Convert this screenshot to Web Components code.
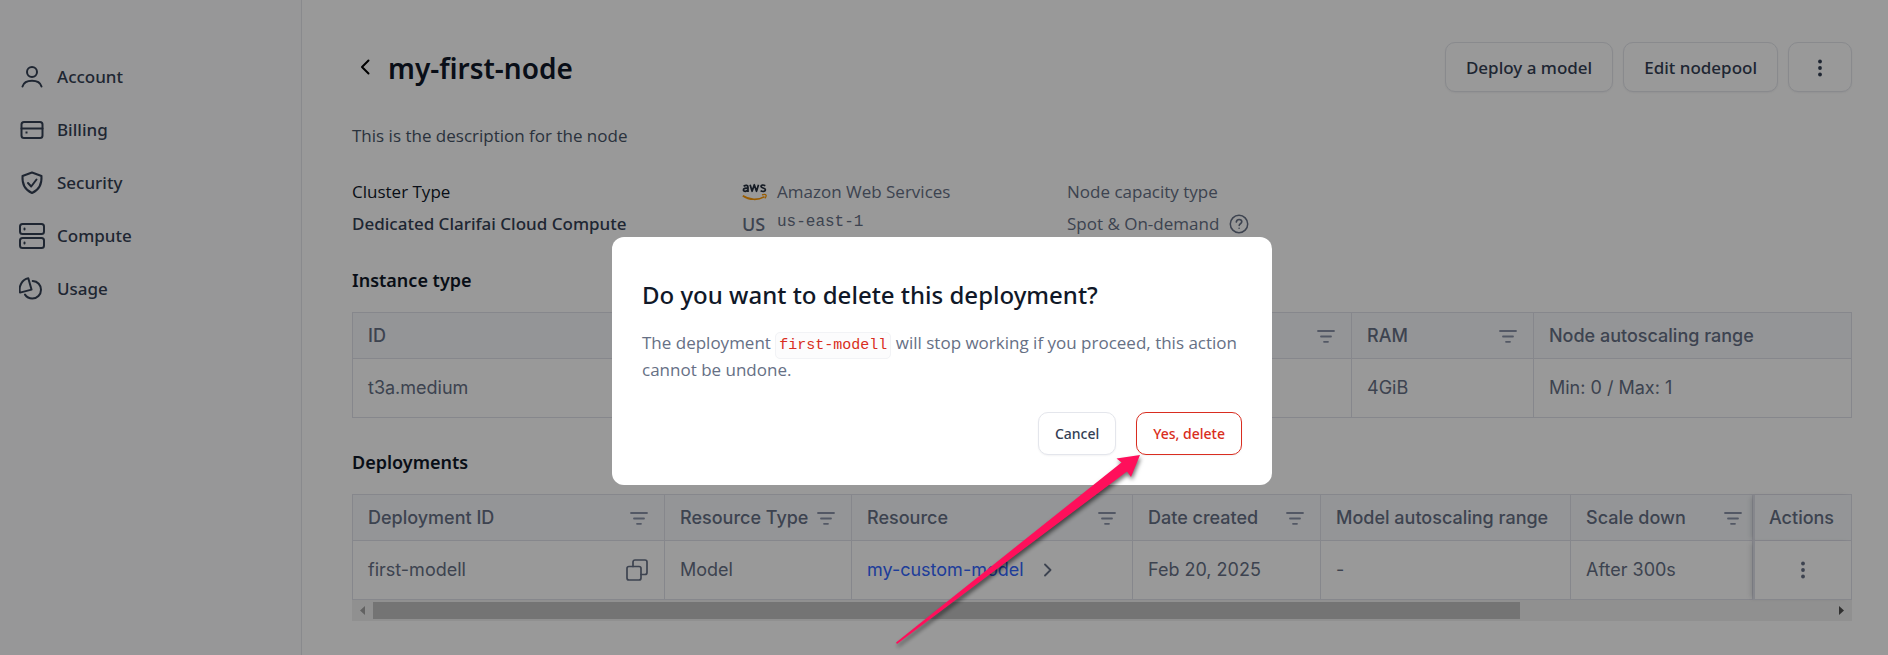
<!DOCTYPE html>
<html lang="en">
<head>
<meta charset="utf-8">
<title>my-first-node</title>
<style>
  body {
    margin: 0;
    background: #fff;
    color: #667085;
    font: 400 17px/24px "Open Sans", "Noto Sans", sans-serif;
    --ink: #101828;
    --text: #344054;
    --line: #e0e1ea;
    --danger: #d92d20;
    --ui: "Noto Sans", "Open Sans", sans-serif;
    --mono: "Liberation Mono", monospace;
  }
</style>
</head>
<body>
<app-shell>
  <side-nav slot="nav">
    <nav-item icon="user" href="#account">Account</nav-item>
    <nav-item icon="card" href="#billing">Billing</nav-item>
    <nav-item icon="shield" href="#security">Security</nav-item>
    <nav-item icon="servers" href="#compute">Compute</nav-item>
    <nav-item icon="pie" href="#usage">Usage</nav-item>
  </side-nav>
  <page-header heading="my-first-node">
    <action-button>Deploy a model</action-button>
    <action-button>Edit nodepool</action-button>
    <action-button label="More actions"><ui-icon name="dots"></ui-icon></action-button>
  </page-header>
  <node-summary></node-summary>
  <page-section heading="Instance type"><instance-table></instance-table></page-section>
  <page-section heading="Deployments"><deployment-table></deployment-table></page-section>
</app-shell>
<confirm-dialog heading="Do you want to delete this deployment?">
  The deployment <code-chip>first-modell</code-chip> will stop working if you proceed, this action cannot be undone.
  <action-button slot="actions" size="small">Cancel</action-button>
  <action-button slot="actions" size="small" tone="danger">Yes, delete</action-button>
  <pointer-arrow slot="pointer"></pointer-arrow>
</confirm-dialog>

<script>
const define = (name, render) => customElements.define(name, class extends HTMLElement {
  connectedCallback() {
    if (this.shadowRoot) return;
    const t = document.createElement('template');
    t.innerHTML = render(this);
    this.attachShadow({ mode: 'open' }).append(t.content.cloneNode(true));
  }
});

const ICONS = {
  user: [24, 24, '<g stroke-width="2"><circle cx="12" cy="7" r="5"/><path d="M2.500 21.500c1-3.400 4.800-5.700 9.500-5.700s8.500 2.300 9.500 5.700"/></g>'],
  card: [24, 24, '<g stroke-width="2"><rect x="1.500" y="4" width="21" height="16" rx="2.500"/><path d="M1.500 10.500h21"/></g><rect x="5.500" y="13.500" width="2" height="2" fill="currentColor" stroke="none"/>'],
  shield: [24, 24, '<g stroke-width="2"><path d="M12 1.500 21.500 5c.5 8-2.500 14-9.500 17C5 19 2 13 2.500 5z"/><path d="m8 12 3.200 3.500L16.500 8.500"/></g>'],
  servers: [26, 26, '<g stroke-width="2"><rect x="1" y="1" width="24" height="10" rx="2.500"/><rect x="1" y="15" width="24" height="10" rx="2.500"/></g><path d="M5.500 5.500v1M5.500 19.500v1" stroke-width="2"/>'],
  pie: [26, 24, '<g stroke-width="2"><path d="M9.300 1.200 12.500 12.600 1 15.600C-.5 9 3 2.500 9.300 1.200z"/><path d="M13.700 4.100c5 .2 8.300 4.100 8.300 8.600 0 5-3.900 8.800-8.700 8.800-3.100 0-5.700-1.500-7.300-3.900"/></g>'],
  back: [10, 16, '<path d="M8.500 1.500 2 8l6.500 6.500" stroke-width="2"/>'],
  next: [8, 14, '<path d="M1 1.500 6.500 7 1 12.500" stroke-width="1.800"/>'],
  dots: [4, 18, '<g fill="currentColor" stroke="none"><circle cx="2" cy="2.500" r="1.900"/><circle cx="2" cy="9" r="1.900"/><circle cx="2" cy="15.500" r="1.900"/></g>'],
  filter: [18, 14, '<path d="M1 2h16M4 7.500h10M7 12.800h4" stroke-width="1.800"/>'],
  copy: [22, 22, '<g stroke-width="1.700"><rect x="1" y="7.500" width="14" height="13.500" rx="2"/><path d="M7 7.500V3a2 2 0 0 1 2-2h10a2 2 0 0 1 2 2v10.500a2 2 0 0 1-2 2h-4"/></g>'],
  help: [20, 20, '<circle cx="10" cy="10" r="8.700" stroke-width="1.500"/><path d="M7.300 8c.3-1.700 1.400-2.500 2.800-2.500 1.500 0 2.700.9 2.700 2.300 0 1.900-2.600 2-2.600 3.700M10.100 14.200v.1" stroke-width="1.600"/>']
};

define('ui-icon', el => {
  const [w, h, body] = ICONS[el.getAttribute('name')];
  return `<style>:host{display:inline-flex;flex:none}svg{display:block}</style>
  <svg width="${w}" height="${h}" viewBox="0 0 ${w} ${h}" fill="none" stroke="currentColor" stroke-linecap="round" stroke-linejoin="round" aria-hidden="true">${body}</svg>`;
});

define('aws-logo', () => `<style>:host{display:flex;flex-direction:column;width:25px;flex:none}svg{display:block}</style>
  <svg width="25" height="18" viewBox="0 0 25 18" fill="none" role="img" aria-label="AWS">
    <g stroke="#252f3e" stroke-width="1.700" stroke-linejoin="round">
      <path d="M1.600 3.200C4 1.800 6 2.200 6 4.200V9M6 5.300C3.500 4.700 1.300 5.400 1.400 7c.1 2 3.600 1.700 4.600-.3"/>
      <path d="M8.100 1.700 10.100 8.300 12.300 1.700 14.500 8.300 16.500 1.700"/>
      <path d="M23.300 2.700C21 1.500 18.900 2 19 3.500c.1 1.900 4.500 1.200 4.400 3.400-.1 1.800-2.700 2-4.800.9"/>
    </g>
    <path d="M.8 12.700c6.500 4.500 15.500 4.700 21.700.9" stroke="#f90" stroke-width="1.700"/>
    <path d="M20 11.900c1.800-.5 3.600-.5 4 .1.300.7-.2 2.300-1.200 3.400" stroke="#f90" stroke-width="1.300"/>
  </svg>`);

define('app-shell', () => `<style>
  :host{display:grid;grid-template-columns:302px minmax(0,1fr);min-height:100vh}
  aside{background:#fcfcfd;border-right:1px solid #e4e7ec}
  main{padding:42px 36px 24px 50px}
  </style><aside><slot name="nav"></slot></aside><main><slot></slot></main>`);

define('side-nav', () => `<style>:host{display:block}nav{display:flex;flex-direction:column;padding-top:50px}</style>
  <nav aria-label="Settings"><slot></slot></nav>`);

define('nav-item', el => `<style>
  :host{display:block}
  a{display:flex;align-items:center;gap:12px;height:53px;padding-left:19px;color:var(--text);font:500 17px/24px var(--ui);text-decoration:none}
  span{display:flex;justify-content:center;width:26px}
  </style><a href="${el.getAttribute('href')}"><span><ui-icon name="${el.getAttribute('icon')}"></ui-icon></span><slot></slot></a>`);

define('page-header', el => `<style>
  :host{display:flex;align-items:center;gap:10px}
  a{display:flex;padding:0 8px;color:#000}
  h1{flex:1;margin:0;padding-top:2px;color:var(--ink);font:600 28px/40px var(--ui)}
  </style><a href="#back" aria-label="Back"><ui-icon name="back"></ui-icon></a><h1>${el.getAttribute('heading')}</h1><slot></slot>`);

define('action-button', el => `<style>
  :host{display:block}
  button{display:flex;align-items:center;justify-content:center;box-sizing:border-box;height:50px;min-width:64px;padding:2px 20px 0;
    border:1px solid #e4e6ec;border-radius:10px;background:#fff;color:var(--text);font:500 17px/24px var(--ui);
    box-shadow:0 1px 2px rgba(16,24,40,.05);white-space:nowrap}
  :host([size=small]) button{height:43px;padding:0 16px;font-size:14px}
  :host([tone=danger]) button{border-color:var(--danger);color:var(--danger)}
  </style><button type="button"${el.hasAttribute('label') ? ` aria-label="${el.getAttribute('label')}"` : ''}><slot></slot></button>`);

define('node-summary', () => `<style>
  :host{display:block}
  p{margin:32px 0;color:#475467}
  .info{display:grid;grid-template-columns:390px 325px minmax(0,1fr)}
  .col{display:grid;grid-auto-rows:24px;gap:8px}
  .row{display:flex;align-items:center;gap:10px}
  .dark{color:var(--ink)}
  .strong{color:var(--text);font:500 17px/24px var(--ui)}
  .cc{width:25px;font:500 18px/24px var(--ui)}
  .region{align-self:flex-start;font:16px/20px var(--mono)}
  </style>
  <p>This is the description for the node</p>
  <div class="info">
    <div class="col"><div class="dark">Cluster Type</div><div class="strong">Dedicated Clarifai Cloud Compute</div></div>
    <div class="col">
      <div class="row"><aws-logo></aws-logo><span>Amazon Web Services</span></div>
      <div class="row"><span class="cc">US</span><span class="region">us-east-1</span></div>
    </div>
    <div class="col"><div>Node capacity type</div><div class="row"><span>Spot &amp; On-demand</span><ui-icon name="help"></ui-icon></div></div>
  </div>`);

define('page-section', el => `<style>
  :host{display:block;margin-top:32px}
  h2{margin:0 0 20px;color:var(--ink);font:600 18px/24px var(--ui)}
  </style><h2>${el.getAttribute('heading')}</h2><slot></slot>`);

const TABLE_CSS = `
  :host{display:block}
  table{width:100%;table-layout:fixed;border-collapse:separate;border-spacing:0;border:solid var(--line);border-width:1px 0 0 1px;font:400 18px/24px Inter,sans-serif}
  th,td{box-sizing:border-box;padding:0 16px 0 15px;border:solid var(--line);border-width:0 1px 1px 0;text-align:left;white-space:nowrap}
  th{height:46px;background:#f7f9fc;font-weight:500}
  td{height:59px;background:#fff}
  .cell{display:flex;align-items:center;justify-content:space-between}
  button{display:flex;margin-left:auto;padding:0;border:0;background:none;color:inherit}
  th button{color:#8a93a8}
  a{color:#3366ff;text-decoration:none}
`;
const head = (t, cls = '') => `<th scope="col" class="${cls}"><div class="cell">${t}<button type="button" aria-label="Filter ${t}"><ui-icon name="filter"></ui-icon></button></div></th>`;
const plain = t => `<th scope="col">${t}</th>`;

define('instance-table', () => `<style>${TABLE_CSS}</style>
  <table>
    <colgroup><col style="width:398px"><col><col style="width:182px"><col style="width:318px"></colgroup>
    <thead><tr>${head('ID')}${head('')}${head('RAM')}${plain('Node autoscaling range')}</tr></thead>
    <tbody><tr><td>t3a.medium</td><td></td><td>4GiB</td><td>Min: 0 / Max: 1</td></tr></tbody>
  </table>`);

define('deployment-table', () => `<style>${TABLE_CSS}
  .resource{display:flex;align-items:center;gap:20px}
  .tight{padding-right:10px}
  .pinned{box-shadow:-4px 0 5px -2px rgba(16,24,40,.15);border-left:2px solid var(--line);padding:0 14px;position:relative}
  .pinned button{margin:0 auto}
  </style>
  <table>
    <colgroup><col style="width:312px"><col style="width:187px"><col><col style="width:188px"><col style="width:250px"><col style="width:182px"><col style="width:99px"></colgroup>
    <thead><tr>${head('Deployment ID')}${head('Resource Type')}${head('Resource')}${head('Date created')}${plain('Model autoscaling range')}${head('Scale down', 'tight')}<th scope="col" class="pinned">Actions</th></tr></thead>
    <tbody><tr>
      <td><div class="cell">first-modell<button type="button" aria-label="Copy ID"><ui-icon name="copy"></ui-icon></button></div></td>
      <td>Model</td>
      <td><div class="resource"><a href="#model">my-custom-model</a><ui-icon name="next"></ui-icon></div></td>
      <td>Feb 20, 2025</td><td>-</td><td>After 300s</td>
      <td class="pinned"><button type="button" aria-label="Row actions"><ui-icon name="dots"></ui-icon></button></td>
    </tr></tbody>
  </table>
  <scroll-track></scroll-track>`);

define('scroll-track', () => `<style>
  :host{display:grid;grid-template-columns:21px minmax(0,59fr) minmax(0,16fr) 21px;align-items:center;height:21px;background:#f1f1f1}
  .thumb{height:17px;background:#c1c1c1}
  svg{display:block;margin:0 auto}
  .end{grid-column:4}
  </style>
  <svg width="5" height="9" viewBox="0 0 5 9"><path d="M5 0v9L0 4.500z" fill="#a3a3a3"/></svg>
  <div class="thumb"></div>
  <svg class="end" width="5" height="9" viewBox="0 0 5 9"><path d="M0 0v9l5-4.500z" fill="#505050"/></svg>`);

define('code-chip', () => `<style>
  :host{display:inline}
  code{padding:4px 3px;border:1px solid #f2f3f6;border-radius:5px;background:#fcfcfd;color:var(--danger);font:15px/15px var(--mono)}
  </style><code><slot></slot></code>`);

define('confirm-dialog', el => `<style>
  :host{position:fixed;inset:0;display:flex;justify-content:center;align-items:flex-start;padding:237px 4px 0 0;background:rgba(0,0,0,.4)}
  section{position:relative;box-sizing:border-box;width:660px;max-width:100%;padding:42px 30px 30px;border-radius:12px;background:#fff}
  h2{margin:0 0 18px;color:var(--ink);font:500 24px/32px var(--ui)}
  .text{line-height:27px}
  .actions{display:flex;justify-content:flex-end;gap:20px;margin-top:29px}
  .pointer{position:absolute;left:276px;top:210px}
  </style>
  <section role="dialog" aria-modal="true" aria-labelledby="t">
    <h2 id="t">${el.getAttribute('heading')}</h2>
    <div class="text"><slot></slot></div>
    <div class="actions"><slot name="actions"></slot></div>
    <div class="pointer"><slot name="pointer"></slot></div>
  </section>`);

define('pointer-arrow', () => `<style>:host{display:block;pointer-events:none}svg{display:block;overflow:visible;filter:drop-shadow(1px 3px 2px rgba(0,0,0,.55))}</style>
  <svg width="260" height="205" viewBox="0 0 260 205" aria-hidden="true">
    <path d="M252 8 228.500 11.500 233.500 15.500 8 195.500 9 197 239 24.500 243 30z" fill="#ff0f5b"/>
  </svg>`);
</script>
</body>
</html>
